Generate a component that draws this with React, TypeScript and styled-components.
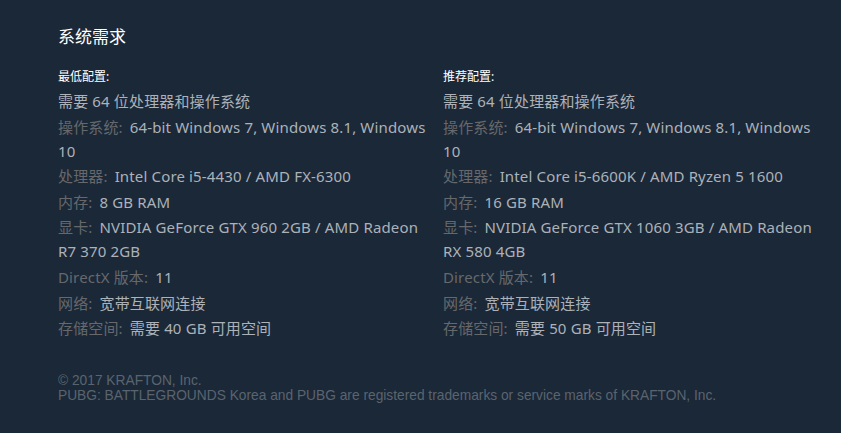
import React from 'react'
import styled, { createGlobalStyle } from 'styled-components'

const GlobalStyle = createGlobalStyle`
  html, body {
    margin: 0;
    padding: 0;
    background: #1b2838;
  }
  body {
    width: 841px;
    height: 433px;
    overflow: hidden;
  }
`

const Page = styled.div`
  box-sizing: border-box;
  width: 841px;
  height: 433px;
  padding: 25px 0 0 58px;
  background: #1b2838;
  font-family: 'Noto Sans', 'Noto Sans CJK SC', sans-serif;
`

const Title = styled.h2`
  margin: 0 0 19px;
  font-size: 17px;
  font-weight: normal;
  line-height: 24px;
  color: #ffffff;
`

const Columns = styled.div`
  display: grid;
  grid-template-columns: 385px 375px;
`

const Column = styled.div`
  width: 375px;
`

const Heading = styled.div`
  font-size: 12px;
  line-height: 18px;
  color: #ffffff;
  margin-bottom: 3px;
`

const List = styled.ul`
  list-style: none;
  margin: 0;
  padding: 0;
`

const Item = styled.li`
  font-size: 15px;
  line-height: 24px;
  letter-spacing: 0.15px;
  color: #acb2b8;
  margin-bottom: 1.6px;
`

const Label = styled.span`
  color: #66686b;
  margin-right: 7px;
`

const Footer = styled.div`
  margin-top: 31px;
  font-family: 'Liberation Sans', Arial, sans-serif;
  font-size: 13.75px;
  line-height: 15px;
  color: #5a646e;
`

type Spec = { label?: string; value: string }

const minimum: Spec[] = [
  { value: '需要 64 位处理器和操作系统' },
  { label: '操作系统:', value: '64-bit Windows 7, Windows 8.1, Windows 10' },
  { label: '处理器:', value: 'Intel Core i5-4430 / AMD FX-6300' },
  { label: '内存:', value: '8 GB RAM' },
  { label: '显卡:', value: 'NVIDIA GeForce GTX 960 2GB / AMD Radeon R7 370 2GB' },
  { label: 'DirectX 版本:', value: '11' },
  { label: '网络:', value: '宽带互联网连接' },
  { label: '存储空间:', value: '需要 40 GB 可用空间' },
]

const recommended: Spec[] = [
  { value: '需要 64 位处理器和操作系统' },
  { label: '操作系统:', value: '64-bit Windows 7, Windows 8.1, Windows 10' },
  { label: '处理器:', value: 'Intel Core i5-6600K / AMD Ryzen 5 1600' },
  { label: '内存:', value: '16 GB RAM' },
  { label: '显卡:', value: 'NVIDIA GeForce GTX 1060 3GB / AMD Radeon RX 580 4GB' },
  { label: 'DirectX 版本:', value: '11' },
  { label: '网络:', value: '宽带互联网连接' },
  { label: '存储空间:', value: '需要 50 GB 可用空间' },
]

const SpecColumn = ({ heading, specs }: { heading: string; specs: Spec[] }) => (
  <Column>
    <Heading>{heading}</Heading>
    <List>
      {specs.map((s, i) => (
        <Item key={i}>
          {s.label && <Label>{s.label}</Label>}
          {s.value}
        </Item>
      ))}
    </List>
  </Column>
)

export default function App() {
  return (
    <Page>
      <GlobalStyle />
      <Title>系统需求</Title>
      <Columns>
        <SpecColumn heading="最低配置:" specs={minimum} />
        <SpecColumn heading="推荐配置:" specs={recommended} />
      </Columns>
      <Footer>
        © 2017 KRAFTON, Inc.
        <br />
        PUBG: BATTLEGROUNDS Korea and PUBG are registered trademarks or service marks of KRAFTON, Inc.
      </Footer>
    </Page>
  )
}
